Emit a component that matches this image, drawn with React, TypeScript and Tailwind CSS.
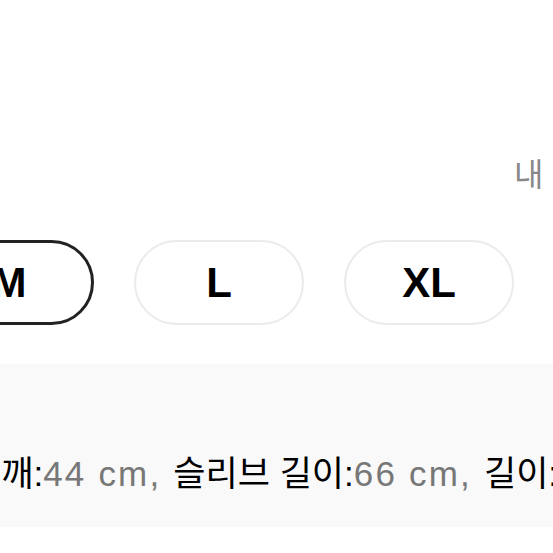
import React from 'react';

const sizes = [
  { label: 'M', selected: true },
  { label: 'L', selected: false },
  { label: 'XL', selected: false },
  { label: 'XXL', selected: false },
];

const specs = [
  { name: '어깨', value: '44 cm' },
  { name: '슬리브 길이', value: '66 cm' },
  { name: '길이', value: '70 cm' },
];

const font = { fontFamily: '"Liberation Sans", "Noto Sans CJK KR", sans-serif' };

export default function App() {
  return (
    <div className="w-[553px] h-[553px] overflow-hidden bg-white" style={font}>
      {/* My size hint */}
      <div className="pt-[156px] pl-[514px] whitespace-nowrap text-[32px] leading-[38px] text-[#888888]">
        내 사이즈
      </div>

      {/* Size options */}
      <div className="mt-[46px] -ml-[76px] flex gap-[40px]">
        {sizes.map((s) => (
          <button
            key={s.label}
            className={`w-[170px] h-[85px] shrink-0 rounded-full bg-white flex items-center justify-center text-[42px] font-bold text-black ${
              s.selected ? 'border-[3px] border-[#222222]' : 'border-2 border-[#ebebeb]'
            }`}
          >
            {s.label}
          </button>
        ))}
      </div>

      {/* Measurements */}
      <div className="mt-[39px] h-[163px] bg-[#f9f9f9] pt-[90px]">
        <p className="-ml-[31px] whitespace-nowrap text-[35px] leading-[40px] text-black">
          {specs.map((sp, i) => (
            <span key={sp.name}>
              {sp.name}:<span className="text-[#777777] tracking-[2.2px]">{sp.value}</span>
              {i < specs.length - 1 ? <span className="text-[#777777] tracking-[2.2px]">, </span> : null}
            </span>
          ))}
        </p>
      </div>
    </div>
  );
}
